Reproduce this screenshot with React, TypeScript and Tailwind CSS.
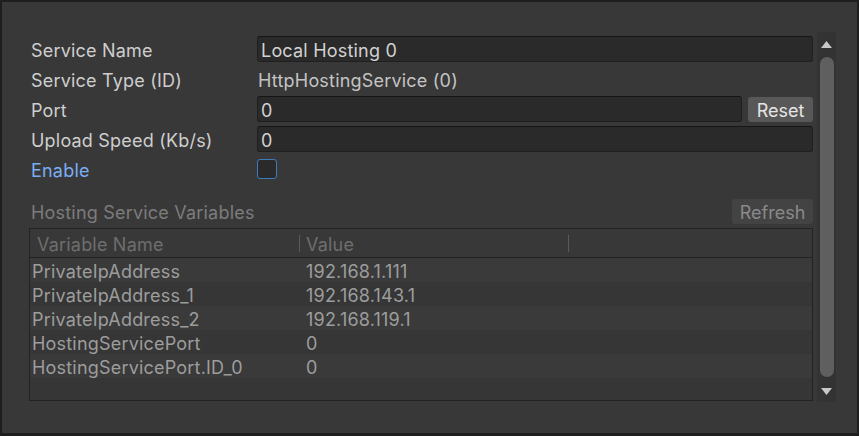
import React from "react";

/* ── Data ──────────────────────────────────────────────────────────────── */
type Variable = { name: string; value: string };

const VARIABLES: Variable[] = [
  { name: "PrivateIpAddress",        value: "192.168.1.111" },
  { name: "PrivateIpAddress_1",      value: "192.168.143.1" },
  { name: "PrivateIpAddress_2",      value: "192.168.119.1" },
  { name: "HostingServicePort",      value: "0" },
  { name: "HostingServicePort.ID_0", value: "0" },
];

/* ── Small pieces ──────────────────────────────────────────────────────── */
function Row({ label, labelClass, children }: { label: string; labelClass?: string; children: React.ReactNode }) {
  return (
    <div className="flex h-[30px] items-center">
      <div className={`w-[228px] shrink-0 pl-[2px] pt-[4px] tracking-[0.2px] ${labelClass ?? "text-[#cecece]"}`}>{label}</div>
      <div className="flex flex-1 items-center">{children}</div>
    </div>
  );
}

function Field({ value }: { value: string }) {
  return (
    <div className="flex h-[26px] flex-1 items-center rounded-[3px] border border-[#1f1f1f] border-t-[#151515] bg-[#2a2a2a] pl-[3px] pt-[3px] tracking-[0.2px] text-[#d2d2d2]">
      {value}
    </div>
  );
}

/* ── App ───────────────────────────────────────────────────────────────── */
export default function App() {
  return (
    <div
      className="flex h-[436px] w-[859px] border-2 border-b-[3px] border-[#1e1e1e] bg-[#383838] text-[18px] leading-none"
      style={{ fontFamily: "Inter, 'Noto Sans', sans-serif" }}
    >
      {/* ── Main column ─────────────────────────────────────────── */}
      <div className="flex w-[811px] flex-col pl-[27px] pt-[32px]">
        <Row label="Service Name">
          <Field value="Local Hosting 0" />
        </Row>
        <Row label="Service Type (ID)">
          <span className="pl-[1px] pt-[4px] tracking-[0.2px] text-[#c4c4c4]">HttpHostingService (0)</span>
        </Row>
        <Row label="Port">
          <Field value="0" />
          <button className="ml-[6px] h-[25px] w-[65px] rounded-[3px] bg-[#585858] pt-[3px] text-[#e6e6e6]">Reset</button>
        </Row>
        <Row label="Upload Speed (Kb/s)">
          <Field value="0" />
        </Row>
        <Row label="Enable" labelClass="text-[#79aef4]">
          <div className="h-[20px] w-[20px] rounded-[3px] border-[1.5px] border-[#3c7bbf] bg-[#2a2a2a]" />
        </Row>

        {/* Variables header */}
        <div className="mt-[13px] flex h-[28px] items-center justify-between">
          <span className="pl-[2px] pt-[4px] tracking-[0.2px] text-[#7c7c7c]">Hosting Service Variables</span>
          <button className="h-[25px] w-[81px] rounded-[3px] bg-[#434343] pt-[3px] text-[#8a8a8a]">Refresh</button>
        </div>

        {/* Variables table */}
        <div className="mt-[3px] flex h-[173px] flex-col border-[1.5px] border-[#232323] bg-[#363636] tracking-[0.2px]">
          <div className="flex h-[29px] shrink-0 items-center border-b border-[#232323] bg-[#383838] text-[#6e6e6e]">
            <span className="w-[269px] pl-[7px] pt-[4px]">Variable Name</span>
            <span className="h-[17px] w-px bg-[#5a5a5a]" />
            <span className="w-[268px] pl-[6px] pt-[4px]">Value</span>
            <span className="h-[17px] w-px bg-[#5a5a5a]" />
          </div>
          {VARIABLES.map((v, i) => (
            <div
              key={v.name}
              className={`flex h-[24px] shrink-0 items-center pt-[4px] text-[#9d9d9d] ${i % 2 === 0 ? "bg-[#3a3a3a]" : "bg-[#363636]"}`}
            >
              <span className="w-[276px] shrink-0 pl-[2px]">{v.name}</span>
              <span>{v.value}</span>
            </div>
          ))}
        </div>
      </div>

      {/* ── Scrollbar ───────────────────────────────────────────── */}
      <div className="ml-[4px] mt-[30px] flex h-[370px] w-[19px] flex-col items-center bg-[#333333]">
        <svg width="11" height="8" viewBox="0 0 11 8" className="mt-[9px]">
          <path d="M5.5 0 L11 7 L0 7 Z" fill="#c8c8c8" />
        </svg>
        <div className="mt-[8px] h-[320px] w-[14px] rounded-full bg-[#5f5f5f]" />
        <svg width="11" height="8" viewBox="0 0 11 8" className="mt-[11px]">
          <path d="M0 0 L11 0 L5.5 7 Z" fill="#c8c8c8" />
        </svg>
      </div>
    </div>
  );
}
